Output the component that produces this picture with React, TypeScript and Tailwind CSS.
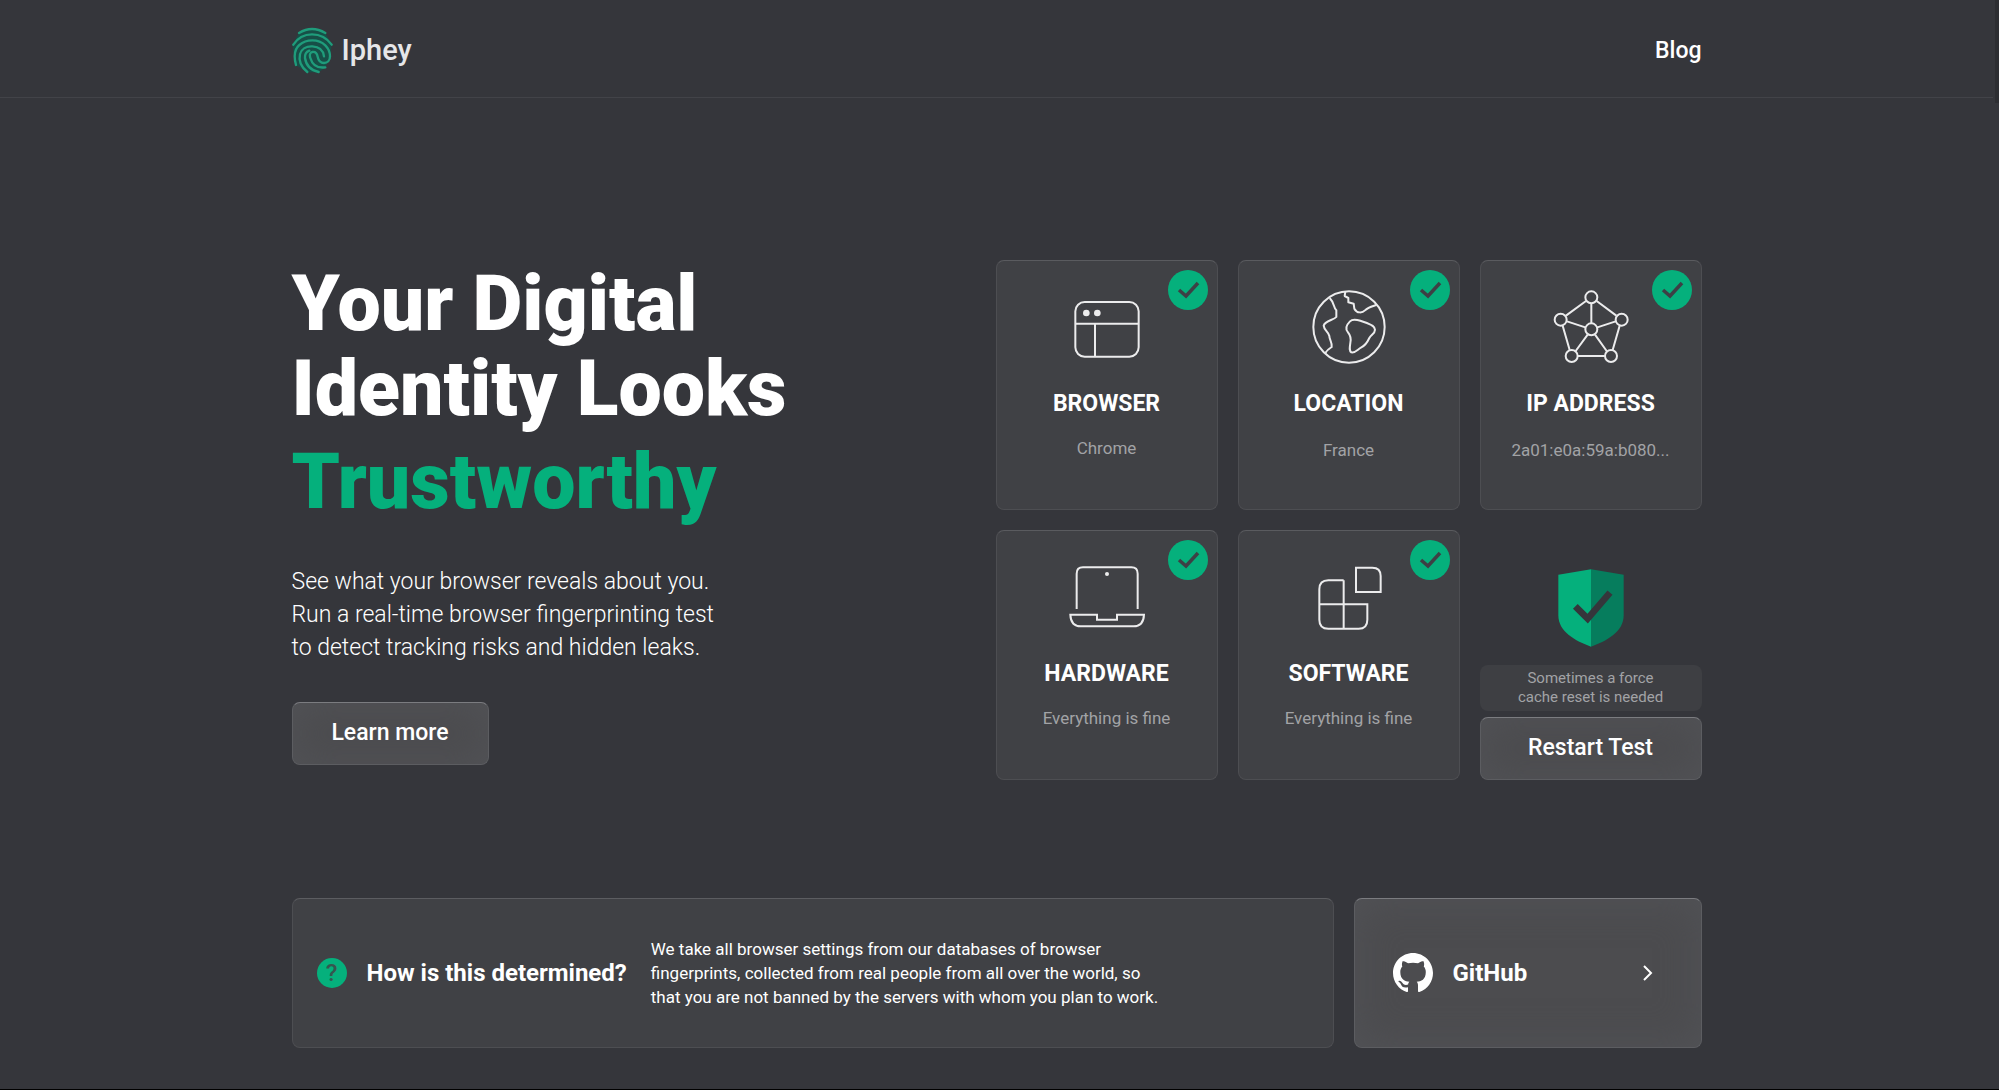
import type { ReactNode } from "react";

const iconProps = {
  className: "h-[78px] w-[78px]",
  fill: "none",
  stroke: "currentColor",
  strokeWidth: 6,
  "aria-hidden": true,
} as const;

function LogoMark() {
  return (
    <svg
      viewBox="66 76 126 147"
      className="h-[49px] w-[42px]"
      fill="none"
      stroke="#1f9c7b"
      strokeWidth="7"
      strokeLinecap="round"
      aria-hidden="true"
    >
      <path
        d="M87 97Q125 74 166 97L185 132L180 168L166 201L146 215L112 215L77 193L67 133Z"
        fill="#174f47"
        stroke="none"
      />
      <path d="M87 97Q126 73 166 97" />
      <path d="M70 132Q90 101 126 101Q163 101 185 132" />
      <path d="M78 193C70 164 74 145 88 133Q104 119 127 119C160 119 180 143 180 167C180 180 172 187 162 187C150 187 145 178 143 168C141 157 134 153 127 154C120 155 118 163 121 172C127 193 143 203 166 200" />
      <path d="M112 214C92 198 86 178 90 161C94 145 109 136 127 137C148 138 160 150 162 167" />
      <path d="M146 214C124 209 108 194 105 172C104 160 110 153 118 150" />
    </svg>
  );
}

function BrowserIcon() {
  return (
    <svg viewBox="266 143 234 234" {...iconProps}>
      <rect x="288" y="185" width="190" height="164" rx="28" />
      <path d="M288 250H478M347 250V349" />
      <circle cx="321" cy="218" r="10" fill="currentColor" stroke="none" />
      <circle cx="354" cy="218" r="10" fill="currentColor" stroke="none" />
    </svg>
  );
}

function GlobeIcon() {
  return (
    <svg viewBox="271 143 234 234" strokeLinejoin="round" {...iconProps}>
      <circle cx="388" cy="260" r="107" />
      <path d="M330 173C345 188 341 202 350 210V230C342 240 316 240 312 256C313 270 327 275 329 287C329 298 338 305 336 320C328 325 322 329 317 338" />
      <path d="M377 154L375 167L386 173V186L402 190L404 205C412 220 428 218 436 210C446 200 458 198 470 194" />
      <path d="M391 243C400 234 414 239 424 242C438 246 466 256 466 268C466 280 454 283 449 293C442 308 434 317 425 321C414 327 406 339 395 336C388 331 390 322 392 308C396 290 390 282 385 276C376 266 380 254 391 243Z" />
    </svg>
  );
}

function NetworkIcon() {
  return (
    <svg viewBox="275 143 234 234" {...iconProps}>
      <path d="M377 182L317 226M409 182L468 226M393 190V248M320 243L375 261M411 261L466 243M307 256L328 329M478 256L457 329M382 283L346 332M404 283L439 332M353 347H433" />
      <circle cx="393" cy="171" r="18" />
      <circle cx="301" cy="238" r="18" />
      <circle cx="484" cy="238" r="18" />
      <circle cx="393" cy="267" r="18" />
      <circle cx="334" cy="347" r="18" />
      <circle cx="452" cy="347" r="18" />
    </svg>
  );
}

function LaptopIcon() {
  return (
    <svg viewBox="267 113 234 234" {...iconProps}>
      <path d="M293 266V160Q293 141 312 141H457Q476 141 476 160V266" />
      <path d="M274 283H354V298H414V283H495C494 306 483 318 464 318H305C286 318 275 306 274 283Z" />
      <circle cx="384" cy="161" r="6" fill="currentColor" stroke="none" />
    </svg>
  );
}

function BlocksIcon() {
  return (
    <svg viewBox="271 113 234 234" {...iconProps}>
      <path d="M409 142H458Q483 142 483 167V215H409Z" />
      <path d="M372 180H326Q299 180 299 207V298Q299 325 326 325H417Q443 325 443 298V252H299M372 180V325" />
    </svg>
  );
}

function CheckBadge() {
  return (
    <svg
      viewBox="0 0 40 40"
      className="absolute top-[9px] right-[9px] h-10 w-10"
      role="img"
      aria-label="Passed"
    >
      <circle cx="20" cy="20" r="20" fill="#05b07c" />
      <path d="M11 20L18 26L30 13" fill="none" stroke="#3d4045" strokeWidth="3.500" />
    </svg>
  );
}

function ShieldIcon() {
  return (
    <svg viewBox="293 146 198 234" className="h-[78px] w-[66px]" aria-hidden="true">
      <path d="M392 147L294 163V285C294 335 345 362 392 379Z" fill="#05b07c" />
      <path d="M392 147L490 163V285C490 335 439 362 392 379Z" fill="#067d5d" />
      <path d="M345 258L382 295L449 217" fill="none" stroke="#35363b" strokeWidth="20" />
    </svg>
  );
}

function GitHubMark() {
  return (
    <svg viewBox="0 0 16 16" className="h-10 w-10" fill="currentColor" aria-hidden="true">
      <path d="M8 0C3.580 0 0 3.580 0 8c0 3.540 2.290 6.530 5.470 7.590.4.070.55-.17.55-.38 0-.19-.01-.82-.01-1.490-2.010.37-2.530-.49-2.690-.94-.09-.23-.48-.94-.82-1.130-.28-.15-.68-.52-.01-.53.63-.01 1.080.58 1.230.82.72 1.210 1.870.87 2.330.66.07-.52.28-.87.51-1.070-1.780-.2-3.640-.89-3.640-3.950 0-.87.31-1.590.82-2.150-.08-.2-.36-1.020.08-2.120 0 0 .67-.21 2.200.82.64-.18 1.320-.27 2-.27s1.360.09 2 .27c1.530-1.040 2.200-.82 2.200-.82.44 1.100.16 1.920.08 2.120.51.56.82 1.270.82 2.150 0 3.070-1.870 3.750-3.650 3.950.29.25.54.73.54 1.480 0 1.070-.01 1.930-.01 2.200 0 .21.15.46.55.38A8.010 8.010 0 0 0 16 8c0-4.420-3.580-8-8-8Z" />
    </svg>
  );
}

const raised =
  "rounded-lg border border-[#5c5d61] border-t-[#7b7c80] bg-[#4c4c4f] shadow-[inset_0_0_40px_rgba(84,86,90,0.7)]";

function TestCard({
  icon,
  title,
  detail,
  low = false,
}: {
  icon: ReactNode;
  title: string;
  detail: string;
  low?: boolean;
}) {
  return (
    <article className="relative flex h-[250px] flex-col items-center rounded-lg border border-[#4d4e52] border-t-[#5a5b5f] bg-[#404145] pt-[27px] text-center">
      <CheckBadge />
      <span className="text-[#ececed]">{icon}</span>
      <h2 className="mt-6 text-[23px] leading-7 font-bold">{title}</h2>
      <p className={`${low ? "mt-5" : "mt-[18px]"} text-[17px] leading-6 text-[#a2a3a6]`}>
        {detail}
      </p>
    </article>
  );
}

export default function App() {
  return (
    <div className="flex min-h-screen border-b border-black bg-[#35363b] font-['Roboto',sans-serif] text-white">
      <div className="min-w-0 flex-1">
        <header className="border-b border-[#424348]">
          <div className="mx-auto flex h-[97px] max-w-[1410px] items-center justify-between pt-1">
            <a href="#" className="flex items-center gap-2 text-[29px] font-medium text-[#e6e6e8]">
              <LogoMark />
              Iphey
            </a>
            <nav className="pt-0.5">
              <a href="#blog" className="text-[23px] font-medium">
                Blog
              </a>
            </nav>
          </div>
        </header>

        <main className="mx-auto max-w-[1410px]">
          <section className="flex items-start justify-between pt-[162px]">
            <div className="pt-0.5">
              <h1 className="text-[77px] leading-[85px] font-black">
                Your Digital
                <br />
                Identity Looks
                <span className="mt-2 block text-[#05b07c]">Trustworthy</span>
              </h1>
              <p className="mt-10 text-[23px] leading-[33px] font-light">
                See what your browser reveals about you.
                <br />
                Run a real-time browser fingerprinting test
                <br />
                to detect tracking risks and hidden leaks.
              </p>
              <button
                type="button"
                className={`${raised} mt-[38px] h-[63px] w-[197px] text-[23px] font-medium`}
              >
                Learn more
              </button>
            </div>

            <div className="grid w-[706px] grid-cols-3 gap-5">
              <TestCard icon={<BrowserIcon />} title="BROWSER" detail="Chrome" />
              <TestCard icon={<GlobeIcon />} title="LOCATION" detail="France" low />
              <TestCard icon={<NetworkIcon />} title="IP ADDRESS" detail="2a01:e0a:59a:b080..." low />
              <TestCard icon={<LaptopIcon />} title="HARDWARE" detail="Everything is fine" />
              <TestCard icon={<BlocksIcon />} title="SOFTWARE" detail="Everything is fine" />
              <div className="flex flex-col items-center justify-end">
                <ShieldIcon />
                <p className="mt-[18px] w-full rounded-lg bg-[#3e3f43] py-1 text-center text-[15px] leading-[19px] text-[#a2a3a6]">
                  Sometimes a force
                  <br />
                  cache reset is needed
                </p>
                <button
                  type="button"
                  className={`${raised} mt-[6px] h-[63px] w-full text-[23px] font-medium`}
                >
                  Restart Test
                </button>
              </div>
            </div>
          </section>

          <section className="mt-[118px] flex gap-5">
            <div className="flex h-[150px] flex-1 items-center rounded-lg border border-[#4d4e52] border-t-[#5c5d61] bg-[#404145] pl-6">
              <span
                aria-hidden="true"
                className="flex h-[30px] w-[30px] items-center justify-center rounded-full bg-[#05b07c] text-2xl leading-none font-medium text-[#35564f]"
              >
                ?
              </span>
              <h2 className="ml-5 text-2xl font-bold">How is this determined?</h2>
              <p className="ml-6 text-[17px] leading-6">
                We take all browser settings from our databases of browser
                <br />
                fingerprints, collected from real people from all over the world, so
                <br />
                that you are not banned by the servers with whom you plan to work.
              </p>
            </div>
            <a href="#github" className={`${raised} flex h-[150px] w-[348px] items-center pr-12 pl-[38px]`}>
              <GitHubMark />
              <span className="ml-5 flex-1 text-2xl font-bold">GitHub</span>
              <svg
                viewBox="0 0 10 16"
                className="h-4 w-[10px]"
                fill="none"
                stroke="currentColor"
                strokeWidth="2"
                aria-hidden="true"
              >
                <path d="M1 1L8 8L1 15" />
              </svg>
            </a>
          </section>
        </main>
      </div>
      <div className="w-[6px] pl-0.5" aria-hidden="true">
        <div className="h-[103px] bg-[#2d2e32]" />
      </div>
    </div>
  );
}
